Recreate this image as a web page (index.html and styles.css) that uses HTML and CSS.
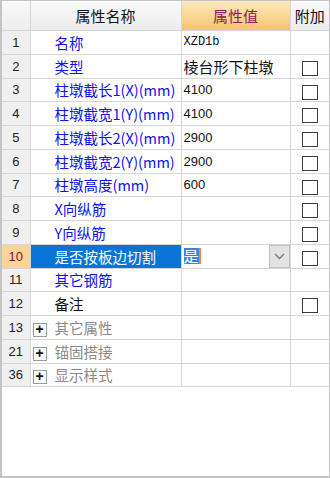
FILE: index.html
```html
<!DOCTYPE html>
<html lang="zh-CN">
<head>
    <meta charset="UTF-8">
    <meta name="viewport" content="width=device-width, initial-scale=1.0">
    <title>属性编辑器</title>
    <link rel="stylesheet" href="styles.css">
</head>
<body>
    <!-- Property grid -->
    <div class="panel">
        <table class="grid">
            <colgroup>
                <col class="col-num">
                <col class="col-name">
                <col class="col-value">
                <col class="col-extra">
            </colgroup>
            <thead>
                <tr>
                    <th class="corner"></th>
                    <th class="head-name">属性名称</th>
                    <th class="head-value">属性值</th>
                    <th class="head-extra">附加</th>
                </tr>
            </thead>
            <tbody>
                <tr>
                    <td class="num">1</td>
                    <td class="name">名称</td>
                    <td class="value mono">XZD1b</td>
                    <td class="extra"></td>
                </tr>
                <tr>
                    <td class="num">2</td>
                    <td class="name">类型</td>
                    <td class="value">棱台形下柱墩</td>
                    <td class="extra"><span class="check"></span></td>
                </tr>
                <tr>
                    <td class="num">3</td>
                    <td class="name">柱墩截长1(X)(mm)</td>
                    <td class="value digits">4100</td>
                    <td class="extra"><span class="check"></span></td>
                </tr>
                <tr>
                    <td class="num">4</td>
                    <td class="name">柱墩截宽1(Y)(mm)</td>
                    <td class="value digits">4100</td>
                    <td class="extra"><span class="check"></span></td>
                </tr>
                <tr>
                    <td class="num">5</td>
                    <td class="name">柱墩截长2(X)(mm)</td>
                    <td class="value digits">2900</td>
                    <td class="extra"><span class="check"></span></td>
                </tr>
                <tr>
                    <td class="num">6</td>
                    <td class="name">柱墩截宽2(Y)(mm)</td>
                    <td class="value digits">2900</td>
                    <td class="extra"><span class="check"></span></td>
                </tr>
                <tr>
                    <td class="num">7</td>
                    <td class="name">柱墩高度(mm)</td>
                    <td class="value digits">600</td>
                    <td class="extra"><span class="check"></span></td>
                </tr>
                <tr>
                    <td class="num">8</td>
                    <td class="name">X向纵筋</td>
                    <td class="value"></td>
                    <td class="extra"><span class="check"></span></td>
                </tr>
                <tr>
                    <td class="num">9</td>
                    <td class="name">Y向纵筋</td>
                    <td class="value"></td>
                    <td class="extra"><span class="check"></span></td>
                </tr>
                <tr class="selected">
                    <td class="num">10</td>
                    <td class="name">是否按板边切割</td>
                    <td class="value">
                        <div class="editor">
                            <span class="editor-text">是</span>
                            <span class="caret"></span>
                            <span class="dropdown">
                                <svg width="11" height="7" viewBox="0 0 11 7"><path d="M1 1 L5.5 5.5 L10 1" fill="none" stroke="#777" stroke-width="1.3"/></svg>
                            </span>
                        </div>
                    </td>
                    <td class="extra"><span class="check"></span></td>
                </tr>
                <tr>
                    <td class="num">11</td>
                    <td class="name">其它钢筋</td>
                    <td class="value"></td>
                    <td class="extra"></td>
                </tr>
                <tr>
                    <td class="num">12</td>
                    <td class="name plain">备注</td>
                    <td class="value"></td>
                    <td class="extra"><span class="check"></span></td>
                </tr>
                <tr class="group">
                    <td class="num">13</td>
                    <td class="name"><span class="toggle">+</span>其它属性</td>
                    <td class="value"></td>
                    <td class="extra"></td>
                </tr>
                <tr class="group">
                    <td class="num">21</td>
                    <td class="name"><span class="toggle">+</span>锚固搭接</td>
                    <td class="value"></td>
                    <td class="extra"></td>
                </tr>
                <tr class="group">
                    <td class="num">36</td>
                    <td class="name"><span class="toggle">+</span>显示样式</td>
                    <td class="value"></td>
                    <td class="extra"></td>
                </tr>
            </tbody>
        </table>
    </div>
</body>
</html>
```

FILE: styles.css
```css
body {
    margin: 0;
    padding: 0;
    background-color: #fff;
    font-family: "Noto Sans CJK SC", sans-serif;
}
.panel {
    width: 330px;
    height: 478px;
    box-sizing: border-box;
    border: 1px solid #c4c4c4;
    border-left: 2px solid #c4c4c4;
    border-bottom: 2px solid #c4c4c4;
    background-color: #fff;
    overflow: hidden;
}
.grid {
    border-collapse: collapse;
    table-layout: fixed;
    width: 327px;
}
.col-num {
    width: 28px;
}
.col-name {
    width: 151px;
}
.col-value {
    width: 109px;
}
.col-extra {
    width: 39px;
}
.grid th,
.grid td {
    border: 1px solid #d6d6d6;
    padding: 0;
    height: 22.75px;
    white-space: nowrap;
    overflow: hidden;
    line-height: 21px;
}
.grid th {
    height: 29px;
    border-top: none;
    font-weight: normal;
    font-size: 15px;
    color: #111;
    background: linear-gradient(#fafafa, #ececec);
}
.grid th:first-child,
.grid td:first-child {
    border-left: none;
}
.grid th:last-child,
.grid td:last-child {
    border-right: none;
}
.grid .head-value {
    color: #8a1a5e;
    background: linear-gradient(#fde9bd, #f6c46c);
}
.num {
    background-color: #f0f0f0;
    text-align: center;
    font-family: "Liberation Sans", sans-serif;
    font-size: 13px;
    color: #222;
}
.name {
    padding-left: 24px !important;
    font-size: 14.5px;
    color: #1010f0;
}
.name.plain {
    color: #111;
}
.value {
    padding-left: 2px !important;
    font-size: 15px;
    color: #111;
}
.value.digits {
    font-family: "Liberation Sans", sans-serif;
    font-size: 13px;
}
.value.mono {
    font-family: "Liberation Mono", monospace;
    font-size: 12px;
}
.extra {
    text-align: center;
}
.check {
    display: inline-block;
    width: 14px;
    height: 13px;
    border: 1px solid #3c3c3c;
    background-color: #fff;
    vertical-align: middle;
}
.selected .num {
    background-color: #fad594;
    color: #7a1a2a;
}
.selected .name {
    background-color: #0a74d6;
    color: #fff;
}
.editor {
    display: flex;
    align-items: center;
    height: 22px;
}
.editor-text {
    display: inline-block;
    height: 16px;
    line-height: 16px;
    background-color: #3b83dc;
    color: #fff;
    font-size: 15px;
}
.caret {
    width: 2px;
    height: 16px;
    background-color: #f08a3c;
}
.dropdown {
    margin-left: auto;
    width: 19px;
    height: 21px;
    display: flex;
    align-items: center;
    justify-content: center;
    background-color: #e3e3e3;
    border: 1px solid #c0c0c0;
}
.group .name {
    padding-left: 2px !important;
    color: #8a8a8a;
}
.toggle {
    display: inline-block;
    width: 12px;
    height: 12px;
    margin-right: 8px;
    border: 1px solid #9a9a9a;
    background-color: #fff;
    color: #111;
    font-family: "Liberation Sans", sans-serif;
    font-size: 14px;
    font-weight: bold;
    line-height: 11px;
    text-align: center;
    vertical-align: middle;
}
```
